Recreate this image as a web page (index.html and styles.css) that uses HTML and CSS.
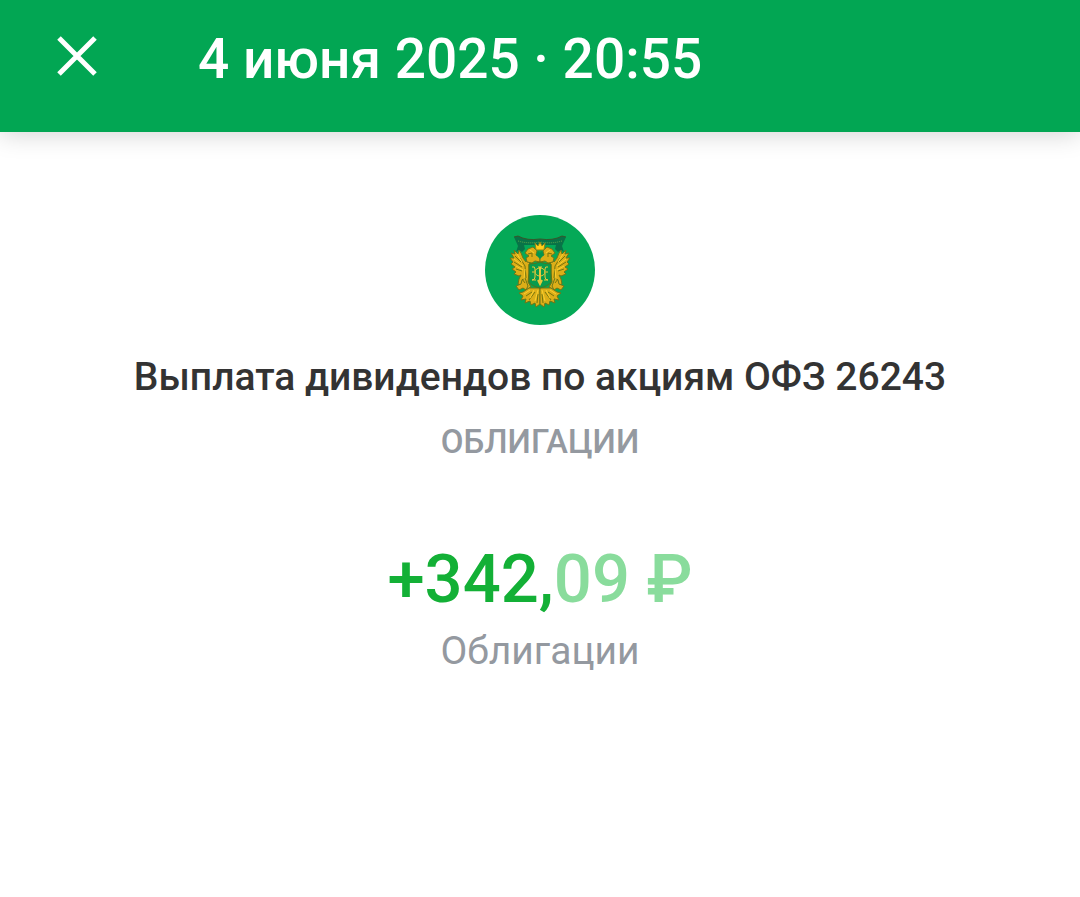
FILE: index.html
```html
<!DOCTYPE html>
<html lang="ru">

<head>
    <meta charset="UTF-8">
    <meta name="viewport" content="width=device-width, initial-scale=1.0">
    <title>Выплата дивидендов</title>
    <link rel="stylesheet" href="styles.css">
</head>

<body>
    <header class="header">
        <button class="close" type="button" aria-label="Закрыть">
            <svg width="40" height="40" viewBox="0 0 40 40" fill="none" stroke="currentColor" stroke-width="5">
                <path d="M2 2L38 38M38 2L2 38" />
            </svg>
        </button>
        <h1 class="date">4 июня 2025 · 20:55</h1>
    </header>
    <main class="operation">
        <svg class="logo" viewBox="0 0 110 110" aria-hidden="true">
            <defs>
                <!-- left half of the eagle, mirrored for the right one -->
                <g id="half">
                    <path d="M29 22L33 21Q42 26 55 24V30Q45 30 39 30L40 34L37 37L34 35L31 37L33 31Z" fill="#087347" />
                    <path d="M33 26Q43 29 55 27" fill="none" stroke="#62ad4c" stroke-width="1" stroke-dasharray="1 1" />
                    <path d="M29 22L33 21Q42 26 55 24" fill="none" stroke="#38562a" stroke-width="1" />
                    <g fill="#dcae18" stroke="#6d7618" stroke-width="1" stroke-linejoin="round">
                        <path d="M46 46L43 44L41 47L38 43L36 38L34 35L33 39L29 35L30 39L26 38L29 43L25 43L28 47L26 49L30 52L27 54L31 57L29 59L34 61L36 60L34 64L33 69L37 70L41 75L46 72L43 67L44 58L44 50Z" />
                        <path d="M55 47L50 46L47 48L42 47L41 43L44 41L40 38L43 34L48 32L52 36L51 40L55 41Z" />
                        <path d="M40 63L37 65L36 69L31 71L34 75L38 73L41 75L43 71Z" />
                        <path d="M51 73L44 73L38 77L34 78L38 81L36 85L41 84L40 88L45 86L46 90L50 88L51 92L55 89V73Z" />
                    </g>
                    <path d="M30 41L36 47M29 47L37 52M31 54L37 56M35 43L40 51M40 51L41 63M37 64L40 68M43 39L47 38L47 42M47 77L41 81M50 77L44 85M53 79L52 88" fill="none" stroke="#75750e" stroke-width="1" />
                    <path d="M32 39L37 47M29 44L38 51M31 51L38 55M40 54L39 64M45 35L49 38M45 75L39 79M49 75L45 83M53 75L50 86" fill="none" stroke="#fbd02f" stroke-width="1" />
                </g>
            </defs>
            <circle cx="55" cy="55" r="55" fill="#05a957" />
            <use href="#half" />
            <use href="#half" transform="translate(110 0) scale(-1 1)" />
            <path d="M44 49Q50 49 55 47Q60 49 66 49V67Q64 71 55 73Q46 71 44 67Z" fill="#089b4d" stroke="#55731a" stroke-width="1" />
            <path d="M50 28L53 31L55 27L57 31L60 28L59 35H51Z" fill="#ffcd18" stroke="#8b8518" stroke-width="1" />
            <path d="M53 36L55 38L57 36L59 40L55 44L51 40Z" fill="#07944d" />
            <g fill="none" stroke="#e8c83b" stroke-width="1">
                <path d="M47 52Q50 51 50 54V62Q50 65 47 65M63 52Q60 51 60 54V62Q60 65 63 65M47 57H49M61 57H63" />
                <ellipse cx="55" cy="57" rx="5" ry="4" />
                <path d="M53 52H57M47 65H51M59 65H63" />
                <path d="M55 52V69M53 65L55 69L57 65" stroke-width="2" />
            </g>
        </svg>
        <h2 class="name">Выплата дивидендов по акциям ОФЗ 26243</h2>
        <p class="category">ОБЛИГАЦИИ</p>
        <p class="amount">+342,<span class="cents">09 ₽</span></p>
        <p class="account">Облигации</p>
    </main>
</body>

</html>
```

FILE: styles.css
```css
body {
    margin: 0;
    background: #fff;
    font-family: Roboto, sans-serif;
    color: #333;
}

h1,
h2,
p {
    margin: 0;
    font-weight: 500;
}

.header {
    display: flex;
    align-items: flex-start;
    gap: 101px;
    padding: 27px 57px 41px;
    background: #02a653;
    color: #fff;
    box-shadow: 0 2px 24px rgba(0, 0, 0, 0.18);
}

.close {
    margin-top: 9px;
    padding: 0;
    border: 0;
    background: none;
    color: inherit;
    cursor: pointer;
}

.close svg {
    display: block;
}

.date {
    font-size: 55px;
    line-height: 64px;
}

.operation {
    display: flex;
    flex-direction: column;
    align-items: center;
    padding: 83px 24px 40px;
    text-align: center;
}

.logo {
    width: 110px;
    height: 110px;
}

.name {
    margin-top: 29px;
    font-size: 39px;
    line-height: 46px;
}

.category {
    margin-top: 22px;
    font-size: 33px;
    line-height: 40px;
    color: #9499a0;
}

.amount {
    margin-top: 79px;
    font-size: 67px;
    line-height: 76px;
    color: #13b036;
}

.cents {
    color: #89dc9c;
}

.account {
    margin-top: 11px;
    font-size: 39px;
    font-weight: 400;
    line-height: 46px;
    color: #9499a0;
}
```
